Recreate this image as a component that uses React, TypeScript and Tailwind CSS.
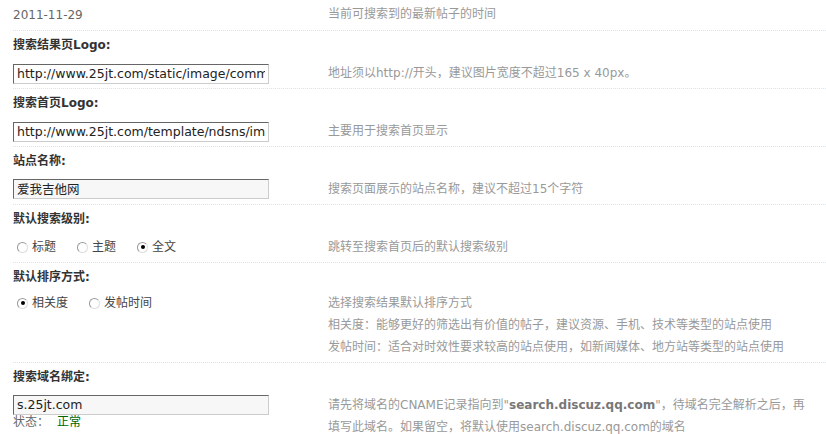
import { ReactNode } from "react";

const font = "font-['DejaVu_Sans','Noto_Sans_CJK_SC',sans-serif]";

function Label({ children }: { children: ReactNode }) {
  return (
    <div className="flex h-[27px] items-center text-[12px] font-bold text-[#333]">{children}</div>
  );
}

function TextInput({ value, gray }: { value: string; gray?: boolean }) {
  return (
    <input
      type="text"
      readOnly
      value={value}
      className={`h-[20px] w-[256px] border border-[#ccc] border-l-[#666] border-t-[#666] px-[3px] text-[12.5px] text-[#222] outline-none ${font} ${
        gray ? "bg-[#f7f7f7]" : "bg-white"
      }`}
    />
  );
}

function Radio({ label, checked }: { label: string; checked?: boolean }) {
  return (
    <label className="mr-[21px] flex items-center">
      <span className="mr-[4px] flex h-[11px] w-[11px] items-center justify-center rounded-full border border-[#dedede] border-l-[#999] border-t-[#999] bg-white">
        {checked && <span className="h-[4px] w-[4px] rounded-full bg-black" />}
      </span>
      <span className="text-[12px] text-[#444]">{label}</span>
    </label>
  );
}

function ValueRow({
  left,
  tip,
  className = "h-[31px] items-center",
}: {
  left: ReactNode;
  tip: ReactNode;
  className?: string;
}) {
  return (
    <div className={`flex border-b border-dotted border-[#d6e6f0] ${className}`}>
      <div className="w-[315px] shrink-0">{left}</div>
      <div className="flex-1 text-[12px] leading-[22px] text-[#999]">{tip}</div>
    </div>
  );
}

export default function App() {
  return (
    <div className={`h-[434px] w-[826px] overflow-hidden bg-white pl-[13px] ${font}`}>
      <ValueRow
        className="h-[31px] items-center pb-[3px]"
        left={<span className="text-[12px] text-[#666]">2011-11-29</span>}
        tip="当前可搜索到的最新帖子的时间"
      />

      <Label>搜索结果页Logo:</Label>
      <ValueRow
        left={<TextInput value="http://www.25jt.com/static/image/common/logo.png" />}
        tip="地址须以http://开头，建议图片宽度不超过165 x 40px。"
      />

      <Label>搜索首页Logo:</Label>
      <ValueRow
        left={<TextInput value="http://www.25jt.com/template/ndsns/image/logo.png" />}
        tip="主要用于搜索首页显示"
      />

      <Label>站点名称:</Label>
      <ValueRow left={<TextInput value="爱我吉他网" gray />} tip="搜索页面展示的站点名称，建议不超过15个字符" />

      <Label>默认搜索级别:</Label>
      <ValueRow
        left={
          <div className="flex pl-[4px]">
            <Radio label="标题" />
            <Radio label="主题" />
            <Radio label="全文" checked />
          </div>
        }
        tip="跳转至搜索首页后的默认搜索级别"
      />

      <Label>默认排序方式:</Label>
      <ValueRow
        className="h-[73px] items-start pt-[2px]"
        left={
          <div className="flex h-[22px] items-center pl-[4px]">
            <Radio label="相关度" checked />
            <Radio label="发帖时间" />
          </div>
        }
        tip={
          <>
            <div>选择搜索结果默认排序方式</div>
            <div>相关度：能够更好的筛选出有价值的帖子，建议资源、手机、技术等类型的站点使用</div>
            <div>发帖时间：适合对时效性要求较高的站点使用，如新闻媒体、地方站等类型的站点使用</div>
          </>
        }
      />

      <Label>搜索域名绑定:</Label>
      <div className="flex items-start pt-[2px]">
        <div className="w-[315px] shrink-0">
          <TextInput value="s.25jt.com" gray />
          <div className="text-[12px] leading-[12px] text-[#666]">
            状态：<span className="ml-[8px] text-[#060]">正常</span>
          </div>
        </div>
        <div className="flex-1 pt-[2px] text-[12px] leading-[22px] text-[#999]">
          请先将域名的CNAME记录指向到"<b className="text-[#777]">search.discuz.qq.com</b>"，待域名完全解析之后，再
          <br />
          填写此域名。如果留空，将默认使用search.discuz.qq.com的域名
        </div>
      </div>
    </div>
  );
}
